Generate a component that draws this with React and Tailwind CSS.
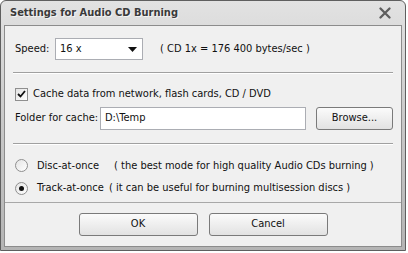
import React from 'react';

const font = { fontFamily: '"DejaVu Sans Condensed", "DejaVu Sans", Tahoma, sans-serif' };

function Sep() {
  return (
    <div className="mx-[8px]">
      <div className="h-px bg-[#a0a0a0]" />
      <div className="h-px bg-white" />
    </div>
  );
}

function Radio({ checked }) {
  return (
    <span className="w-[13px] h-[13px] rounded-full border border-[#8f8f8f] bg-gradient-to-br from-[#e4e4e4] to-white flex items-center justify-center shrink-0">
      {checked && <span className="w-[5px] h-[5px] rounded-full bg-[#111]" />}
    </span>
  );
}

function Button({ children, className = '' }) {
  return (
    <div className={`h-[23px] shrink-0 border border-[#7a7a7a] rounded-[3px] bg-gradient-to-b from-[#fbfbfb] to-[#e2e2e2] flex items-center justify-center text-[11px] text-[#111] ${className}`}>
      {children}
    </div>
  );
}

export default function App() {
  return (
    <div className="w-[408px] h-[253px] bg-white" style={font}>
      <div className="w-[406px] h-[251px] rounded-t-[6px] border border-[#5f5f5f] bg-gradient-to-b from-[#e2e2e2] via-[#c8c8c8] to-[#b4b4b4] flex flex-col">
        {/* title bar */}
        <div className="h-[24px] flex items-center justify-between pl-[9px] pr-[14px] shrink-0">
          <span className="font-bold text-[11px] text-[#3a3a3a] [text-shadow:1px_1px_0_#f4f4f4]">Settings for Audio CD Burning</span>
          <svg width="12" height="12" viewBox="0 0 12 12">
            <path d="M1.5 1.5 L10.5 10.5 M10.5 1.5 L1.5 10.5" stroke="#5e5e5e" strokeWidth="2.3" strokeLinecap="round" />
          </svg>
        </div>

        {/* body */}
        <div className="flex-1 mx-[3px] mb-[3px] border border-[#8c8c8c] bg-[#f0f0f0] flex flex-col text-[11px] text-[#111]">
          {/* speed row */}
          <div className="flex items-center pl-[10px] pt-[12px] pb-[12px]">
            <span className="w-[40px] shrink-0">Speed:</span>
            <div className="w-[88px] h-[22px] shrink-0 border border-[#abadb3] bg-white flex items-center justify-between pl-[4px] pr-[5px]">
              <span>16 x</span>
              <svg width="9" height="5" viewBox="0 0 9 5"><path d="M0 0 H9 L4.5 5 Z" fill="#111" /></svg>
            </div>
            <span className="ml-[17px]">( CD 1x = 176 400 bytes/sec )</span>
          </div>
          <Sep />

          {/* cache */}
          <div className="flex items-center pl-[10px] pt-[12px] gap-[5px]">
            <span className="w-[13px] h-[13px] shrink-0 border border-[#8f8f8f] bg-gradient-to-br from-[#e4e4e4] to-white flex items-center justify-center">
              <svg width="9" height="8" viewBox="0 0 9 8"><path d="M1 4 L3.5 6.5 L8 1" stroke="#111" strokeWidth="1.8" fill="none" /></svg>
            </span>
            <span>Cache data from network, flash cards, CD / DVD</span>
          </div>
          <div className="flex items-center pl-[10px] pt-[4px] pb-[13px]">
            <span className="w-[85px] shrink-0">Folder for cache:</span>
            <div className="w-[206px] h-[23px] shrink-0 border border-[#abadb3] bg-white flex items-center pl-[4px]">D:\Temp</div>
            <Button className="ml-[10px] w-[77px]">Browse...</Button>
          </div>
          <Sep />

          {/* mode */}
          <div className="flex items-center pl-[10px] pt-[13px]">
            <Radio />
            <span className="ml-[9px] w-[77px] shrink-0">Disc-at-once</span>
            <span>( the best mode for high quality Audio CDs burning )</span>
          </div>
          <div className="flex items-center pl-[10px] pt-[6px]">
            <Radio checked />
            <span className="ml-[9px] w-[72px] shrink-0">Track-at-once</span>
            <span>( it can be useful for burning multisession discs )</span>
          </div>

          {/* footer */}
          <div className="mt-auto border-t border-[#a8a8a8] h-[44px] flex items-start justify-center gap-[11px] pt-[10px]">
            <Button className="w-[119px]">OK</Button>
            <Button className="w-[119px]">Cancel</Button>
          </div>
        </div>
      </div>
    </div>
  );
}
